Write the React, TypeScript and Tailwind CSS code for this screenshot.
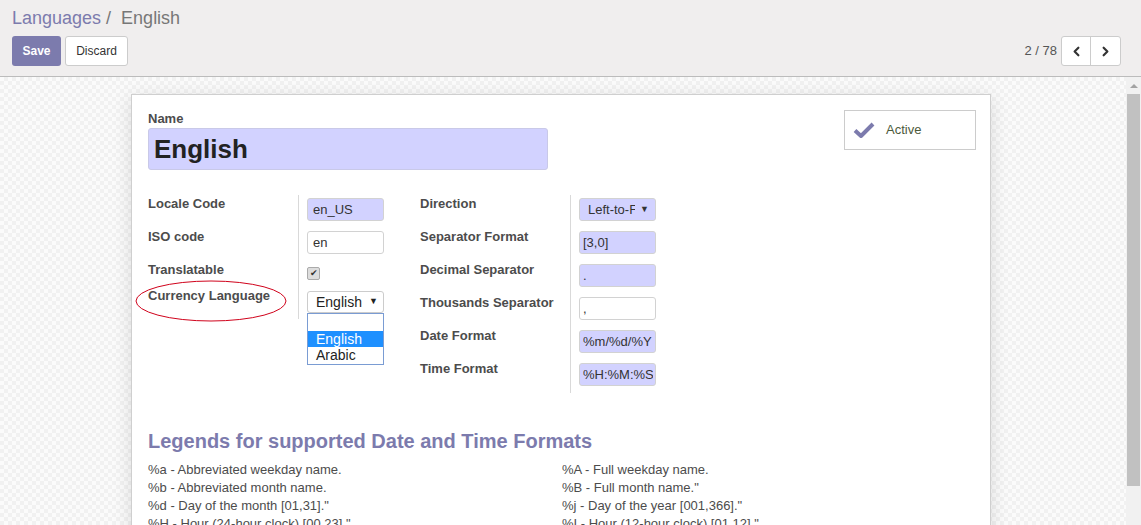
import { ChevronLeft, ChevronRight } from "lucide-react"

const font = { fontFamily: '"Liberation Sans", Arial, sans-serif' }

const legendLeft = [
  "%a - Abbreviated weekday name.",
  "%b - Abbreviated month name.",
  '%d - Day of the month [01,31]."',
  '%H - Hour (24-hour clock) [00,23]."',
]
const legendRight = [
  "%A - Full weekday name.",
  '%B - Full month name."',
  '%j - Day of the year [001,366]."',
  '%I - Hour (12-hour clock) [01,12]."',
]

function Row({ label, children, tight }: { label: string; children: React.ReactNode; tight?: boolean }) {
  return (
    <div className="flex">
      <div className="w-[150px] text-[13px] leading-[18px] font-bold text-[#4c4c4c]">{label}</div>
      <div className={`border-l border-[#d9d9d9] pl-[8px] ${tight ? "h-[26px]" : "h-[33px] pt-[3px]"}`}>{children}</div>
    </div>
  )
}

function Field({ value, req, left }: { value: string; req?: boolean; left?: boolean }) {
  return (
    <div
      className={`flex h-[23px] w-[77px] items-center overflow-hidden whitespace-nowrap rounded-[3px] border border-[#d2d2d2] text-[13px] text-[#333] ${
        left ? "pl-[5px]" : "pl-[3px]"
      } ${req ? "bg-[#d2d2ff]" : "bg-white"}`}
    >
      <span className="block w-[70px] overflow-hidden">{value}</span>
    </div>
  )
}

export default function App() {
  return (
    <div className="flex h-screen flex-col overflow-hidden bg-white" style={font}>
      {/* control panel */}
      <div className="h-[77px] shrink-0 border-b border-[#bcbcbc] bg-[#f0eeee] px-[12px]">
        <div className="pt-[6px] text-[18px] leading-[24px]">
          <span className="text-[#7c7bad]">Languages</span>
          <span className="text-[#777]"> /&nbsp; English</span>
        </div>
        <div className="mt-[6px] flex items-center justify-between pr-[8px]">
          <div className="flex gap-[4px]">
            <button className="h-[30px] w-[49px] rounded-[3px] bg-[#7c7bad] text-[12px] font-bold text-white">Save</button>
            <button className="h-[30px] w-[63px] rounded-[3px] border border-[#ccc] bg-white text-[12px] text-[#333]">Discard</button>
          </div>
          <div className="flex items-center gap-[4px]">
            <span className="text-[13px] text-[#555]">2 / 78</span>
            <div className="flex h-[30px] rounded-[3px] border border-[#ccc] bg-white">
              <button className="flex w-[29px] items-center justify-center border-r border-[#ccc] text-[#333]">
                <ChevronLeft size={15} strokeWidth={3.5} />
              </button>
              <button className="flex w-[29px] items-center justify-center text-[#333]">
                <ChevronRight size={15} strokeWidth={3.5} />
              </button>
            </div>
          </div>
        </div>
      </div>

      {/* content */}
      <div className="flex min-h-0 flex-1">
        <div className="flex-1 overflow-hidden bg-[repeating-conic-gradient(#f1f1f1_0_25%,#fbfbfb_0_50%)] bg-[length:8px_8px]">
          <div className="ml-[131px] mt-[17px] w-[860px] border border-[#cfcfcf] bg-white pl-[16px] pr-[14px] pt-[15px] shadow-[0_4px_18px_rgba(0,0,0,0.12)]">
            {/* name + button box */}
            <div className="flex items-start justify-between">
              <div>
                <div className="text-[13px] leading-[18px] font-bold text-[#4c4c4c]">Name</div>
                <div className="flex h-[42px] w-[400px] items-center rounded-[3px] border border-[#c9c9e8] bg-[#d2d2ff] px-[5px] text-[26px] font-bold text-[#222]">
                  English
                </div>
              </div>
              <div className="flex h-[40px] w-[132px] items-center border border-[#ccc] pl-[8px]">
                <svg width="22" height="16" viewBox="0 0 22 16">
                  <path d="M2 8.5 L8 14 L20 2" fill="none" stroke="#7c7bad" strokeWidth="4" strokeLinejoin="round" />
                </svg>
                <span className="ml-[11px] text-[13px] text-[#4c5a3c]">Active</span>
              </div>
            </div>

            {/* groups */}
            <div className="mt-[25px] flex">
              <div className="w-[272px]">
                <Row label="Locale Code">
                  <Field value="en_US" req left />
                </Row>
                <Row label="ISO code">
                  <Field value="en" left />
                </Row>
                <Row label="Translatable" tight>
                  <div className="mt-[6px] flex h-[13px] w-[13px] items-center justify-center rounded-[2px] border border-[#aaa] bg-[#ddd] text-[9px] leading-none text-[#333]">
                    ✔
                  </div>
                </Row>
                <div className="relative flex">
                  <div className="w-[150px] text-[13px] leading-[18px] font-bold text-[#4c4c4c]">Currency Language</div>
                  <svg className="absolute left-[-13px] top-[-7px]" width="152" height="42" viewBox="0 0 152 42">
                    <ellipse cx="76" cy="21" rx="75" ry="20" fill="none" stroke="#d0021b" strokeWidth="1" />
                  </svg>
                  <div className="relative h-[32px] border-l border-[#d9d9d9] pl-[8px] pt-[4px]">
                    <div className="flex h-[22px] w-[77px] items-center justify-between rounded-[3px] border border-[#ccc] bg-white pl-[8px] pr-[5px] text-[14px] text-[#222]">
                      <span>English</span>
                      <span className="text-[9px]">▼</span>
                    </div>
                    <div className="absolute left-[8px] top-[26px] z-10 w-[77px] border border-[#7a9cd3] bg-white pb-[1px] text-[14px] leading-[16px] text-[#222]">
                      <div className="h-[17px]" />
                      <div className="bg-[#1e90ff] pl-[8px] text-white">English</div>
                      <div className="pl-[8px]">Arabic</div>
                    </div>
                  </div>
                </div>
              </div>

              <div>
                <Row label="Direction">
                  <div className="flex h-[23px] w-[77px] items-center justify-between rounded-[3px] border border-[#d2d2d2] bg-[#d2d2ff] pl-[8px] pr-[6px] text-[13px] text-[#333]">
                    <span className="w-[47px] overflow-hidden whitespace-nowrap">Left-to-F</span>
                    <span className="text-[9px]">▼</span>
                  </div>
                </Row>
                <Row label="Separator Format">
                  <Field value="[3,0]" req />
                </Row>
                <Row label="Decimal Separator">
                  <Field value="." req />
                </Row>
                <Row label="Thousands Separator">
                  <Field value="," />
                </Row>
                <Row label="Date Format">
                  <Field value="%m/%d/%Y" req />
                </Row>
                <Row label="Time Format">
                  <Field value="%H:%M:%S" req />
                </Row>
              </div>
            </div>

            {/* legends */}
            <h2 className="mt-[35px] text-[20px] leading-[26px] font-bold text-[#7c7bad]">
              Legends for supported Date and Time Formats
            </h2>
            <div className="mt-[7px] grid grid-cols-2 pb-[20px] text-[13px] leading-[18px] text-[#4c4c4c]">
              <div>
                {legendLeft.map((t) => (
                  <div key={t}>{t}</div>
                ))}
              </div>
              <div>
                {legendRight.map((t) => (
                  <div key={t}>{t}</div>
                ))}
              </div>
            </div>
          </div>
        </div>

        {/* scrollbar */}
        <div className="flex w-[15px] shrink-0 flex-col bg-[#f1f1f1]">
          <div className="flex h-[17px] items-center justify-center">
            <div className="h-0 w-0 border-x-[4px] border-b-[4px] border-x-transparent border-b-[#a3a3a3]" />
          </div>
          <div className="mx-[1px] h-[392px] bg-[#c1c1c1]" />
        </div>
      </div>
    </div>
  )
}
